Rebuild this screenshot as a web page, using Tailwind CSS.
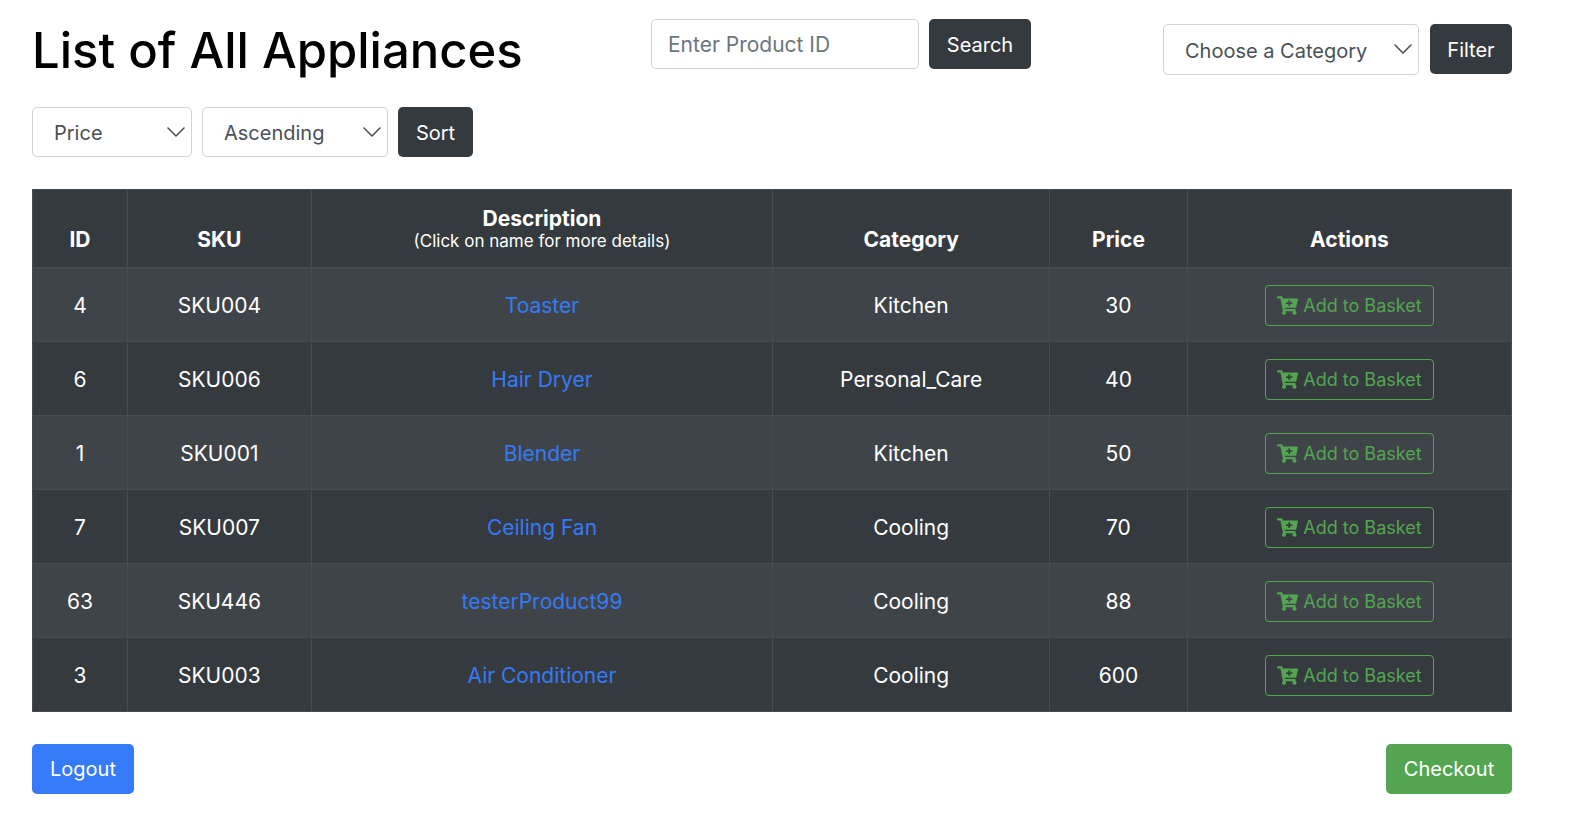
<!DOCTYPE html>
<html lang="en">
<head>
<meta charset="utf-8">
<meta name="viewport" content="width=device-width, initial-scale=1">
<title>List of All Appliances</title>
<script src="https://cdn.jsdelivr.net/npm/@tailwindcss/browser@4"></script>
</head>
<body class="bg-white font-['Inter','Liberation_Sans',sans-serif] text-[20px] leading-8 text-white">
<svg class="hidden" aria-hidden="true">
  <symbol id="chevron" viewBox="0 0 18 10"><path d="M1 1l8 8 8-8" fill="none" stroke="currentColor" stroke-width="1.6" stroke-linecap="round" stroke-linejoin="round"/></symbol>
  <symbol id="cart-plus" viewBox="0 0 576 512"><path fill="currentColor" d="M504.717 320H211.572l6.545 32h268.418c15.401 0 26.816 14.301 23.403 29.319l-5.517 24.276C523.112 414.668 536 433.828 536 456c0 31.202-25.519 56.444-56.824 55.994-29.823-.429-54.35-24.631-55.155-54.447-.44-16.287 6.085-31.049 16.803-41.548H231.176C241.553 426.165 248 440.326 248 456c0 31.813-26.528 57.431-58.67 55.938-28.54-1.325-51.751-24.385-53.251-52.917-1.158-22.034 10.436-41.455 28.051-51.586L93.883 64H24C10.745 64 0 53.255 0 40V24C0 10.745 10.745 0 24 0h102.529c11.401 0 21.228 8.021 23.513 19.19L159.208 64H551.99c15.401 0 26.816 14.301 23.403 29.319l-47.273 208C525.637 312.246 515.923 320 504.717 320zM408 168h-48v-40c0-8.837-7.163-16-16-16h-16c-8.837 0-16 7.163-16 16v40h-48c-8.837 0-16 7.163-16 16v16c0 8.837 7.163 16 16 16h48v40c0 8.837 7.163 16 16 16h16c8.837 0 16-7.163 16-16v-40h48c8.837 0 16-7.163 16-16v-16c0-8.837-7.163-16-16-16z"/></symbol>
</svg>
<main class="pt-[19px] pr-20 pb-8 pl-8">
  <header class="grid grid-cols-[619fr_512fr_349fr] items-start">
    <h1 class="text-[49px] leading-16 font-medium whitespace-nowrap text-black">List of All Appliances</h1>
    <form class="flex gap-2.5">
      <input type="text" aria-label="Product ID" placeholder="Enter Product ID" class="h-[50px] w-[268px] rounded-[5px] border border-[#ced4da] px-4 text-[21px] text-[#495057] placeholder:text-[#6c757d]">
      <button type="button" class="h-[50px] w-[102px] rounded-[5px] bg-[#353a3e] pt-0.5">Search</button>
    </form>
    <form class="flex justify-end gap-[11px] pt-[5px]">
      <div class="relative w-[256px] text-[#495057]">
        <select aria-label="Category" class="h-[51px] w-full appearance-none rounded-[5px] border border-[#ced4da] bg-white pt-0.5 pl-[21px]"><option>Choose a Category</option></select>
        <svg class="pointer-events-none absolute top-5 right-[7px] h-2.5 w-[18px]" aria-hidden="true"><use href="#chevron"/></svg>
      </div>
      <button type="button" class="h-[50px] w-[82px] rounded-[5px] bg-[#353a3e] pt-0.5">Filter</button>
    </form>
  </header>
  <form class="mt-6 flex gap-2.5">
    <div class="relative w-[160px] text-[#495057]">
      <select aria-label="Sort by" class="h-[50px] w-full appearance-none rounded-[5px] border border-[#ced4da] bg-white pt-0.5 pl-[21px]"><option>Price</option></select>
      <svg class="pointer-events-none absolute top-5 right-[7px] h-2.5 w-[18px]" aria-hidden="true"><use href="#chevron"/></svg>
    </div>
    <div class="relative w-[186px] text-[#495057]">
      <select aria-label="Order" class="h-[50px] w-full appearance-none rounded-[5px] border border-[#ced4da] bg-white pt-0.5 pl-[21px]"><option>Ascending</option></select>
      <svg class="pointer-events-none absolute top-5 right-[7px] h-2.5 w-[18px]" aria-hidden="true"><use href="#chevron"/></svg>
    </div>
    <button type="button" class="h-[50px] w-[75px] rounded-[5px] bg-[#353a3e] pt-0.5">Sort</button>
  </form>
  <table class="mt-8 w-full table-fixed border-collapse bg-[#353a3e] text-center text-[21px] [&_td]:border [&_td]:border-[#464c53] [&_td]:pt-0.5 [&_th]:border [&_th]:border-b-2 [&_th]:border-[#464c53] [&_th]:px-4 [&_th]:pb-[11px] [&_th]:align-bottom [&_th]:font-bold">
    <colgroup><col class="w-[6.42%]"><col class="w-[12.43%]"><col class="w-[31.2%]"><col class="w-[18.72%]"><col class="w-[9.32%]"><col></colgroup>
    <thead>
      <tr class="h-[78px]"><th scope="col">ID</th><th scope="col">SKU</th><th scope="col"><span class="block leading-5">Description</span><span class="block pb-[3px] text-[17px] leading-6 font-normal">(Click on name for more details)</span></th><th scope="col">Category</th><th scope="col">Price</th><th scope="col">Actions</th></tr>
    </thead>
    <tbody id="rows" class="[&_tr]:h-[74px] [&_tr:nth-child(odd)]:bg-[#3f4448]"></tbody>
  </table>
  <footer class="mt-8 flex justify-between">
    <button type="button" class="h-[50px] w-[102px] rounded-[5px] bg-[#357af6]">Logout</button>
    <button type="button" class="h-[50px] w-[126px] rounded-[5px] bg-[#54a551]">Checkout</button>
  </footer>
</main>
<script>
  const products = [
    [4, 'SKU004', 'Toaster', 'Kitchen', 30],
    [6, 'SKU006', 'Hair Dryer', 'Personal_Care', 40],
    [1, 'SKU001', 'Blender', 'Kitchen', 50],
    [7, 'SKU007', 'Ceiling Fan', 'Cooling', 70],
    [63, 'SKU446', 'testerProduct99', 'Cooling', 88],
    [3, 'SKU003', 'Air Conditioner', 'Cooling', 600]
  ];
  document.getElementById('rows').innerHTML = products.map(([id, sku, name, category, price]) => `
    <tr><td>${id}</td><td>${sku}</td><td><a href="#" class="text-[#357af6]">${name}</a></td><td>${category}</td><td>${price}</td>
    <td><button type="button" class="mx-auto flex h-[41px] w-[169px] items-center justify-center gap-[5px] rounded-[4px] border border-[#54a551] text-[18px] whitespace-nowrap text-[#54a551]"><svg class="h-[19px] w-[21px] shrink-0" aria-hidden="true"><use href="#cart-plus"/></svg>Add to Basket</button></td></tr>`).join('');
</script>
</body>
</html>
